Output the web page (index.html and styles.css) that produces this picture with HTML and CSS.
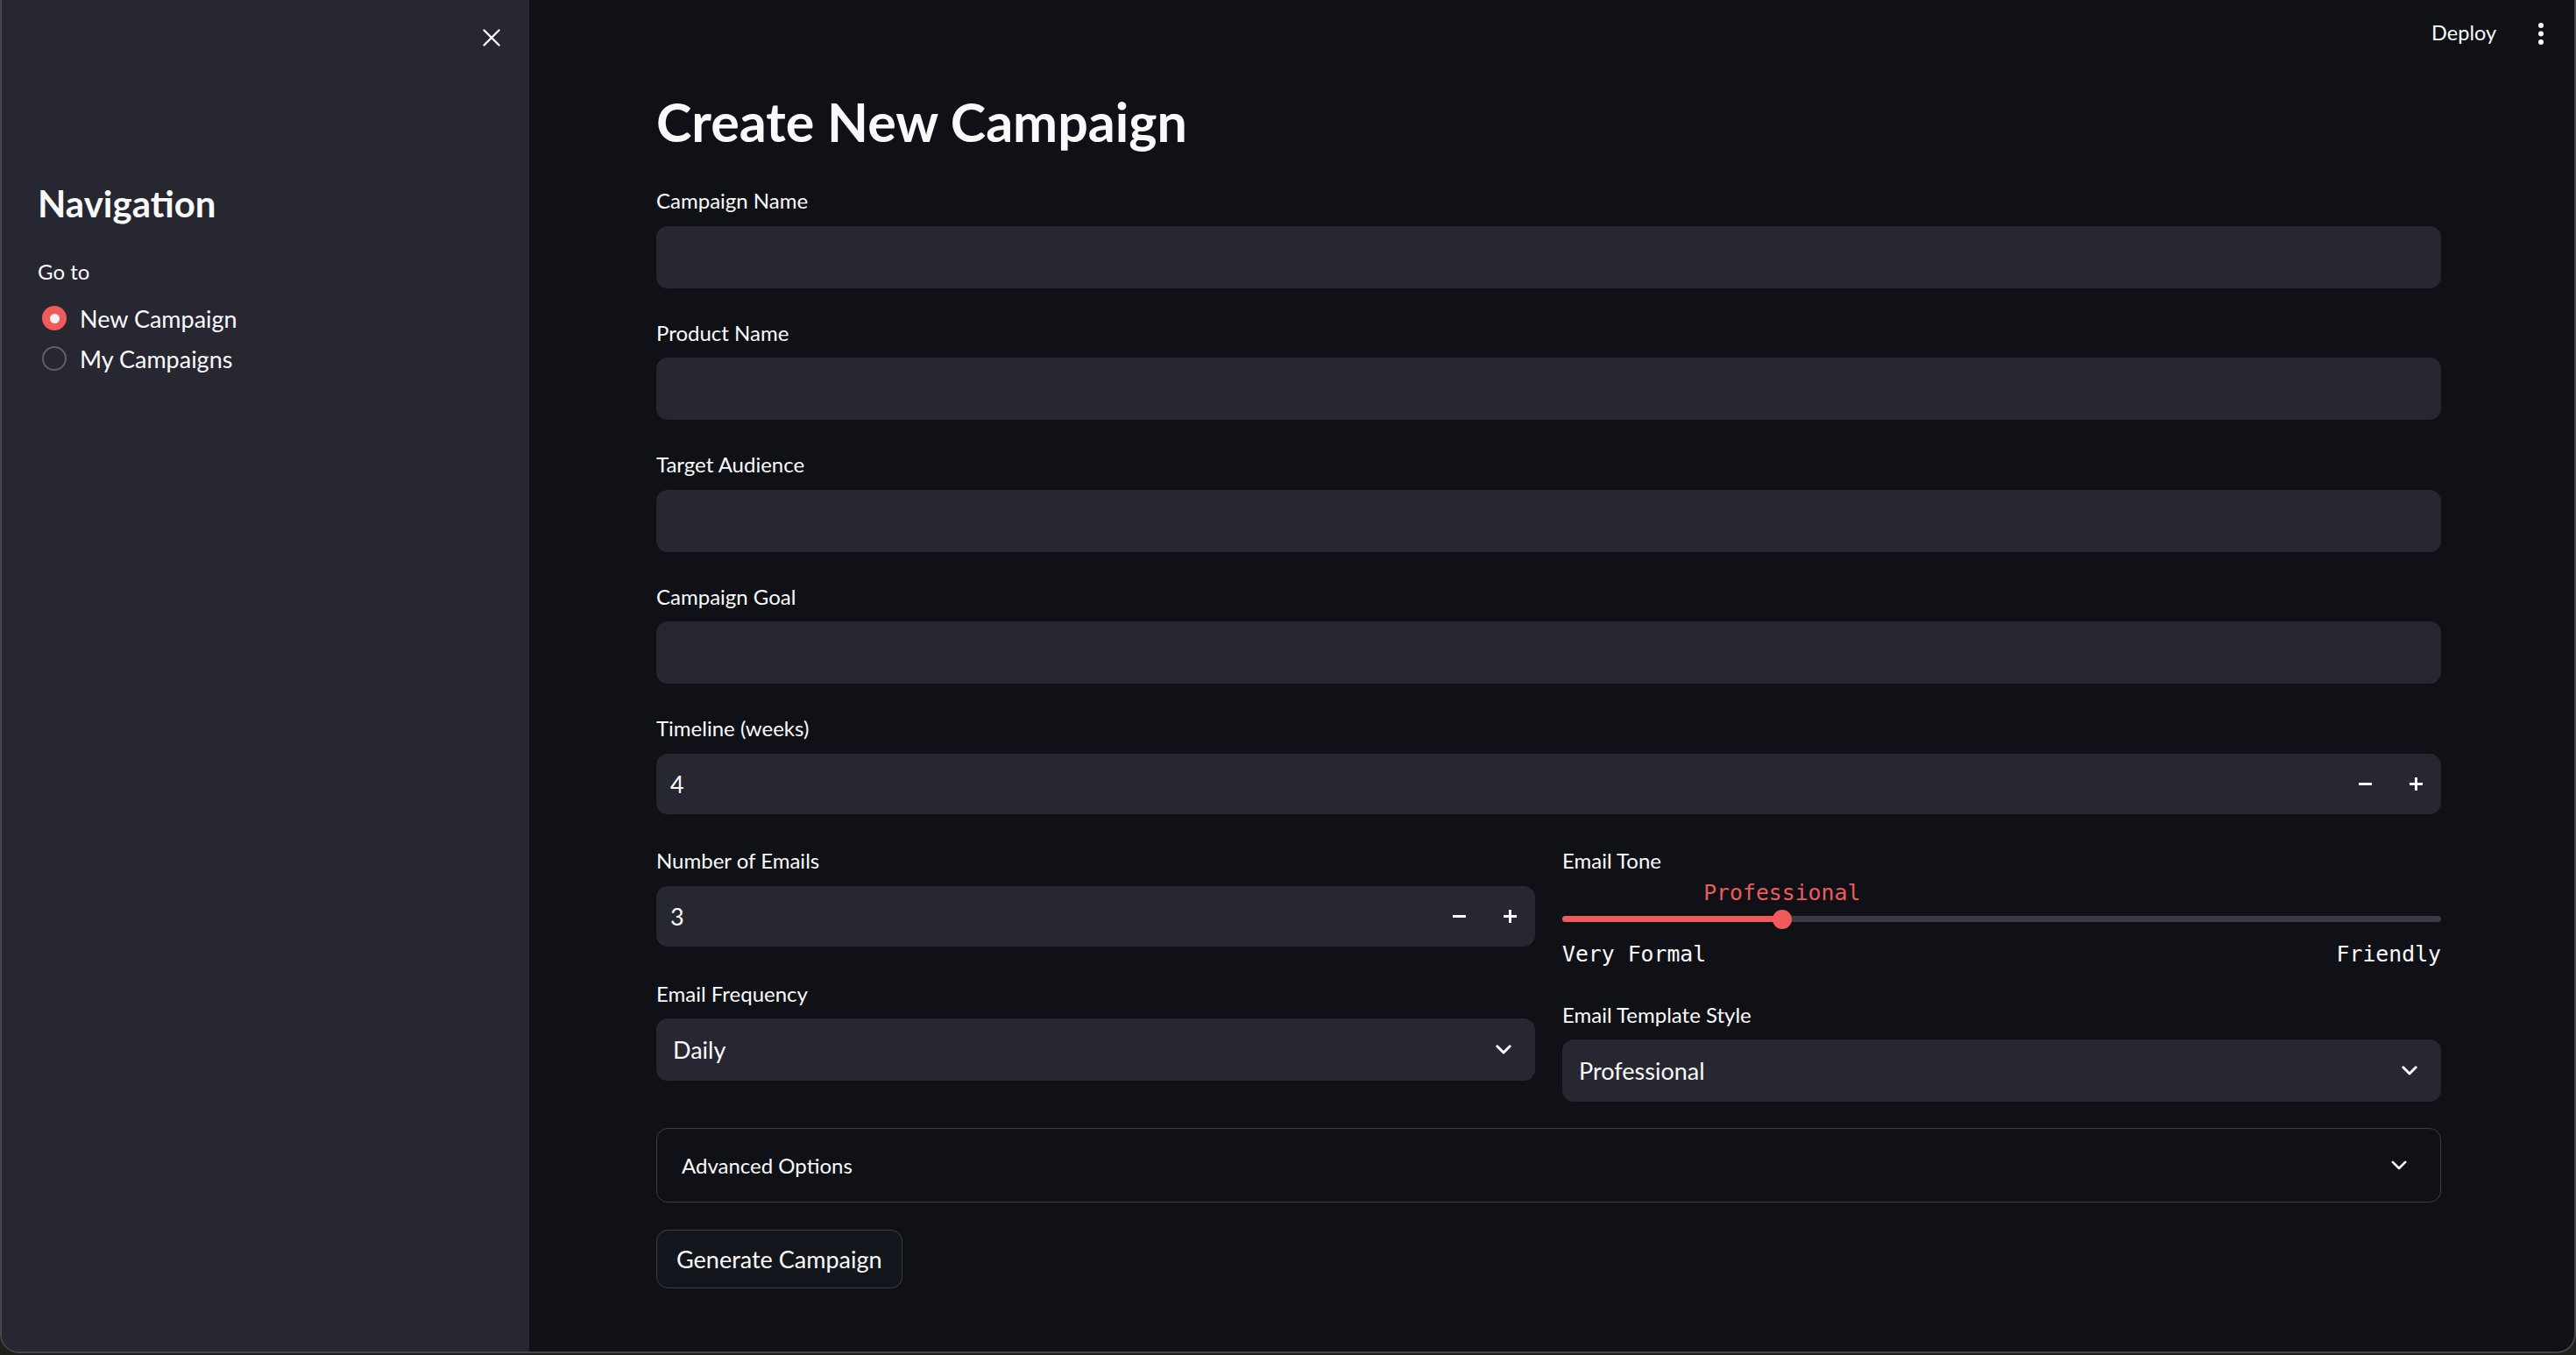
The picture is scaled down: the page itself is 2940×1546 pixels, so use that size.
FILE: index.html
```html
<!DOCTYPE html>
<html lang="en">
<head>
<meta charset="utf-8">
<title>Create New Campaign</title>
<link rel="stylesheet" href="styles.css">
</head>
<body>
<div class="window">
  <aside class="sidebar">
    <div class="sidebar-top">
      <svg class="close-icon" width="20" height="20" viewBox="0 0 20 20" aria-label="Close sidebar"><path d="M1.5 1.5 L18.5 18.5 M18.5 1.5 L1.5 18.5" stroke="#fafafa" stroke-width="2.4" stroke-linecap="round"/></svg>
    </div>
    <h2 class="nav-title">Navigation</h2>
    <div class="radio-caption">Go to</div>
    <div class="radio-group">
      <div class="radio-row"><span class="radio checked"></span><span class="radio-text">New Campaign</span></div>
      <div class="radio-row"><span class="radio"></span><span class="radio-text">My Campaigns</span></div>
    </div>
  </aside>
  <main class="main">
    <header class="toolbar">
      <span class="deploy">Deploy</span>
      <svg class="kebab" width="6" height="25" viewBox="0 0 6 25"><circle cx="3" cy="3" r="3" fill="#fafafa"/><circle cx="3" cy="12.5" r="3" fill="#fafafa"/><circle cx="3" cy="22" r="3" fill="#fafafa"/></svg>
    </header>
    <section class="content">
      <h1 class="title">Create New Campaign</h1>

      <div class="field first">
        <div class="label">Campaign Name</div>
        <div class="input"></div>
      </div>
      <div class="field">
        <div class="label">Product Name</div>
        <div class="input"></div>
      </div>
      <div class="field">
        <div class="label">Target Audience</div>
        <div class="input"></div>
      </div>
      <div class="field">
        <div class="label">Campaign Goal</div>
        <div class="input"></div>
      </div>
      <div class="field">
        <div class="label">Timeline (weeks)</div>
        <div class="input number">
          <span class="value">4</span>
          <span class="step"><svg width="15" height="3" viewBox="0 0 15 3"><rect width="15" height="3" fill="#fafafa"/></svg></span>
          <span class="step"><svg width="15" height="15" viewBox="0 0 15 15"><rect x="0" y="6" width="15" height="3" fill="#fafafa"/><rect x="6" y="0" width="3" height="15" fill="#fafafa"/></svg></span>
        </div>
      </div>

      <div class="cols">
        <div class="col">
          <div class="field">
            <div class="label">Number of Emails</div>
            <div class="input number">
              <span class="value">3</span>
              <span class="step"><svg width="15" height="3" viewBox="0 0 15 3"><rect width="15" height="3" fill="#fafafa"/></svg></span>
              <span class="step"><svg width="15" height="15" viewBox="0 0 15 15"><rect x="0" y="6" width="15" height="3" fill="#fafafa"/><rect x="6" y="0" width="3" height="15" fill="#fafafa"/></svg></span>
            </div>
          </div>
          <div class="field freq">
            <div class="label">Email Frequency</div>
            <div class="input select">
              <span class="value">Daily</span>
              <svg class="chev" width="18" height="11" viewBox="0 0 18 11"><path d="M1.8 1.8 L9 9 L16.2 1.8" fill="none" stroke="#fafafa" stroke-width="3" stroke-linecap="round" stroke-linejoin="round"/></svg>
            </div>
          </div>
        </div>
        <div class="col">
          <div class="field">
            <div class="label">Email Tone</div>
            <div class="slider" style="--pos: 25%">
              <div class="slider-value-row"><span class="slider-value">Professional</span></div>
              <div class="track-row">
                <div class="track"><div class="track-fill"></div></div>
                <div class="thumb"></div>
              </div>
              <div class="ticks"><span>Very Formal</span><span>Friendly</span></div>
            </div>
          </div>
          <div class="field template">
            <div class="label">Email Template Style</div>
            <div class="input select">
              <span class="value">Professional</span>
              <svg class="chev" width="18" height="11" viewBox="0 0 18 11"><path d="M1.8 1.8 L9 9 L16.2 1.8" fill="none" stroke="#fafafa" stroke-width="3" stroke-linecap="round" stroke-linejoin="round"/></svg>
            </div>
          </div>
        </div>
      </div>

      <div class="expander">
        <span class="expander-text">Advanced Options</span>
        <svg class="exp-chev" width="18" height="11" viewBox="0 0 18 11"><path d="M1.8 1.8 L9 9 L16.2 1.8" fill="none" stroke="#fafafa" stroke-width="2.6" stroke-linecap="round" stroke-linejoin="round"/></svg>
      </div>

      <div class="btn-row"><button class="btn">Generate Campaign</button></div>
    </section>
  </main>
</div>
</body>
</html>
```

FILE: styles.css
```css
* {
  box-sizing: border-box;
  margin: 0;
  padding: 0;
}

html, body {
  width: 2940px;
  height: 1546px;
  overflow: hidden;
}

body {
  background: #1f201a;
  font-family: "Lato", "Noto Sans", sans-serif;
  color: #fafafa;
}

.window {
  display: flex;
  width: 2940px;
  height: 1544px;
  border: 2px solid #45464b;
  border-top: 0;
  border-radius: 0 0 22px 22px;
  overflow: hidden;
  background: #0f1117;
}

/* Sidebar */
.sidebar {
  width: 602px;
  flex: none;
  background: #262730;
  padding-left: 41px;
  display: flex;
  flex-direction: column;
}

.sidebar-top {
  display: flex;
  justify-content: flex-end;
  padding: 33px 33px 0 0;
  height: 53px;
}

.nav-title {
  margin-top: 155px;
  font-size: 42px;
  line-height: 49px;
  font-weight: 700;
}

.radio-caption {
  margin-top: 39px;
  font-size: 24px;
  line-height: 27.6px;
}

.radio-group {
  margin-top: 24px;
  display: flex;
  flex-direction: column;
  gap: 15px;
}

.radio-row {
  display: flex;
  align-items: center;
  gap: 15px;
  height: 31px;
}

.radio {
  width: 28px;
  height: 28px;
  margin-left: 5px;
  border-radius: 50%;
  border: 2px solid #5f6066;
  background: #262730;
  flex: none;
  display: flex;
  align-items: center;
  justify-content: center;
}

.radio.checked {
  border: 0;
  background: #ef5b5b;
}

.radio.checked::after {
  content: "";
  width: 11px;
  height: 11px;
  border-radius: 50%;
  background: #f2f2f2;
}

.radio-text {
  font-size: 27px;
  line-height: 31px;
}

/* Main */
.main {
  flex: 1;
  display: flex;
  flex-direction: column;
  min-width: 0;
}

.toolbar {
  height: 80px;
  display: flex;
  justify-content: flex-end;
  align-items: flex-start;
  gap: 48px;
  padding: 24px 35px 0 0;
}

.deploy {
  font-size: 23.5px;
  line-height: 27.6px;
}

.kebab {
  margin-top: 2px;
}

.content {
  padding: 0 152px 0 145px;
  display: flex;
  flex-direction: column;
}

.title {
  margin-top: 23px;
  font-size: 61px;
  line-height: 72px;
  font-weight: 700;
}

.field {
  margin-top: 37px;
}

.field.first {
  margin-top: 40px;
}

.label {
  font-size: 24px;
  line-height: 27.6px;
  margin-bottom: 15px;
}

.input {
  height: 71px;
  background: #262730;
  border-radius: 13px;
}

.input.number {
  height: 69px;
  display: flex;
  align-items: center;
}

.value {
  font-size: 27px;
  line-height: 31px;
}

.number .value {
  flex: 1;
  padding-left: 16px;
}

.step {
  width: 58px;
  height: 100%;
  display: flex;
  align-items: center;
  justify-content: center;
}

.input.select {
  display: flex;
  align-items: center;
  justify-content: space-between;
  padding: 0 27px 0 19px;
}

.cols {
  display: grid;
  grid-template-columns: 1fr 1fr;
  column-gap: 31px;
  align-items: start;
  margin-top: 39px;
}

.col {
  display: flex;
  flex-direction: column;
}

.col .field:first-child {
  margin-top: 0;
}

.col .field.freq {
  margin-top: 40px;
}

.col .field.template {
  margin-top: 40px;
}

/* Slider */
.slider {
  display: flex;
  flex-direction: column;
}

.slider-value-row {
  margin-top: -7px;
  padding-left: var(--pos);
  height: 30px;
}

.slider-value {
  display: inline-block;
  transform: translateX(-50%);
  font-family: "DejaVu Sans Mono", "Liberation Mono", monospace;
  font-size: 24.8px;
  line-height: 30px;
  color: #ef5b5b;
}

.track-row {
  position: relative;
  height: 22px;
  margin-top: 4px;
  display: flex;
  align-items: center;
}

.track {
  width: 100%;
  height: 7px;
  border-radius: 4px;
  background: #3b3d45;
  overflow: hidden;
}

.track-fill {
  width: var(--pos);
  height: 100%;
  background: #ef5b5b;
}

.thumb {
  position: absolute;
  top: 0;
  left: var(--pos);
  width: 22px;
  height: 22px;
  margin-left: -11px;
  border-radius: 50%;
  background: #ef5b5b;
}

.ticks {
  margin-top: 14px;
  display: flex;
  justify-content: space-between;
  font-family: "DejaVu Sans Mono", "Liberation Mono", monospace;
  font-size: 24.8px;
  line-height: 30px;
}

/* Expander */
.expander {
  margin-top: 30px;
  height: 85px;
  border: 1px solid #3c3e44;
  border-radius: 13px;
  display: flex;
  align-items: center;
  justify-content: space-between;
  padding: 0 38px 0 28px;
}

.expander-text {
  font-size: 24px;
  line-height: 27.6px;
}

/* Button */
.btn-row {
  margin-top: 31px;
  display: flex;
}

.btn {
  height: 67px;
  padding: 0 22px;
  background: #13161d;
  border: 1px solid #3c3e44;
  border-radius: 13px;
  color: #fafafa;
  font-family: "Lato", "Noto Sans", sans-serif;
  font-size: 27px;
  line-height: 31px;
}
```
